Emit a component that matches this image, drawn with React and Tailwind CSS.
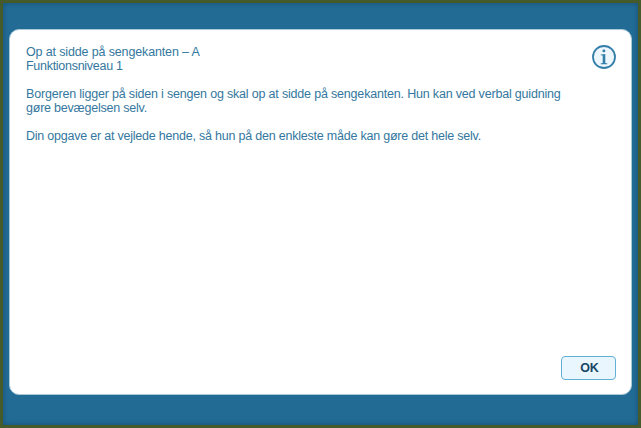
function InfoIcon() {
  return (
    <svg width="26" height="26" viewBox="0 0 26 26" className="-mr-px -mt-px shrink-0" aria-hidden="true">
      <circle cx="13" cy="13" r="11" fill="#eef7fd" stroke="#347fa9" strokeWidth="1.8" />
      <ellipse cx="12.9" cy="6.9" rx="1.5" ry="1.4" fill="#347fa9" />
      <path d="M9.8 10.4L14.3 10V18.9L16.4 19.5V20.3H9.6V19.5L11.7 18.9V11.6L9.8 11.2Z" fill="#347fa9" />
    </svg>
  );
}

export default function App() {
  return (
    <div className="h-[428px] w-[641px] overflow-hidden bg-[#465b2c] p-[3px] font-['Liberation_Sans',Arial,sans-serif]">
      <div className="h-[422px] w-[635px] bg-[#226b95] pl-1.5 pt-[26px] shadow-[inset_0_0_5px_0px_#174d70]">
        <main className="flex h-[366px] w-[623px] flex-col justify-between rounded-[10px] border border-[#a9c8da] bg-white pb-3.5 pl-4 pr-[15px] pt-[15px]">
          <div className="flex items-start justify-between">
            <div className="whitespace-nowrap text-[12.5px] leading-[14px] text-[#34779e]">
              <p className="tracking-[-0.14px]">Op at sidde på sengekanten – A</p>
              <p className="tracking-[-0.28px]">Funktionsniveau 1</p>
              <p className="mt-3.5 tracking-[-0.184px]">Borgeren ligger på siden i sengen og skal op at sidde på sengekanten. Hun kan ved verbal guidning</p>
              <p className="tracking-[-0.22px]">gøre bevægelsen selv.</p>
              <p className="mt-3.5 tracking-[-0.218px]">Din opgave er at vejlede hende, så hun på den enkleste måde kan gøre det hele selv.</p>
            </div>
            <InfoIcon />
          </div>
          <button className="h-6 w-[55px] self-end rounded-[4px] border border-[#62afd5] bg-[#eaf6fe] pl-0.5 text-[12.5px] font-bold leading-[21px] text-[#174765]">OK</button>
        </main>
      </div>
    </div>
  );
}
